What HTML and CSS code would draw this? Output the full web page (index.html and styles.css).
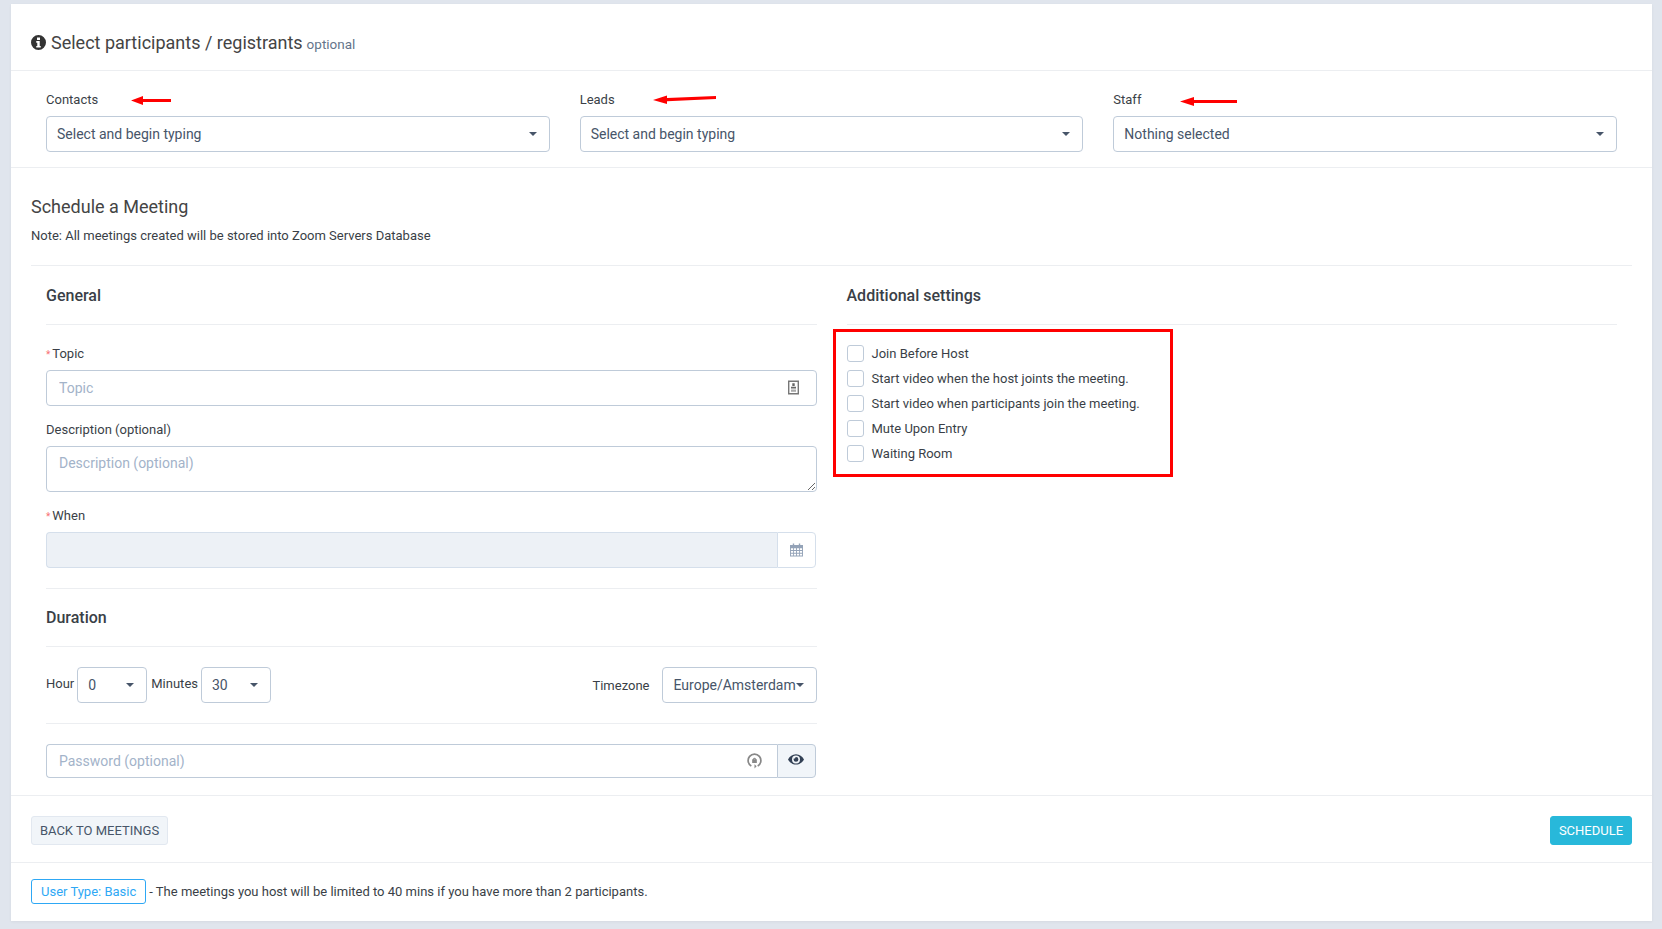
FILE: index.html
```html
<!DOCTYPE html>
<html lang="en">
<head>
    <meta charset="UTF-8">
    <meta name="viewport" content="width=device-width, initial-scale=1.0">
    <title>Schedule a Meeting</title>
    <link rel="stylesheet" href="styles.css">
</head>
<body>

    <div class="panel">

        <!-- Participants -->
        <div class="panel-head">
            <svg class="info-icon" viewBox="0 0 16 16"><path fill-rule="evenodd" d="M8 0a8 8 0 1 1 0 16A8 8 0 0 1 8 0zM6.400 2.700v2.600h3.200V2.700zM5.600 6.500v1.800h1.100v3.300H5.600v1.800h4.800v-1.800H9.300V6.500z"/></svg>
            <span class="panel-title">Select participants / registrants</span>
            <span class="panel-sub">optional</span>
        </div>

        <div class="participants">
            <div class="field">
                <label class="field-label">Contacts</label>
                <svg class="arrow arrow-contacts" viewBox="0 0 40 9"><path d="M0 4.500 12 0V3L40 3V6L12 6V9z"/></svg>
                <button class="select">Select and begin typing<span class="caret"></span></button>
            </div>
            <div class="field">
                <label class="field-label">Leads</label>
                <svg class="arrow arrow-leads" viewBox="0 0 63 10"><path d="M0 6 14 1.500V4L63 2V5L14 7.200V10z"/></svg>
                <button class="select">Select and begin typing<span class="caret"></span></button>
            </div>
            <div class="field">
                <label class="field-label">Staff</label>
                <svg class="arrow arrow-staff" viewBox="0 0 57 9"><path d="M0 4.500 14 0V3L57 3V6L14 6V9z"/></svg>
                <button class="select">Nothing selected<span class="caret"></span></button>
            </div>
        </div>

        <!-- Meeting form -->
        <div class="meeting">
            <h2 class="meeting-title">Schedule a Meeting</h2>
            <p class="meeting-note">Note: All meetings created will be stored into Zoom Servers Database</p>

            <div class="columns">
                <div class="col-general">
                    <h3 class="section-title">General</h3>

                    <label class="form-label"><span class="req">*</span>Topic</label>
                    <div class="input-wrap">
                        <input class="input" type="text" placeholder="Topic">
                        <svg class="input-icon icon-topic" viewBox="0 0 11 14"><path fill="none" stroke="#777" stroke-width="1.400" d="M.7.7h9.600v12.600H.7z"/><path fill="#666" d="M4.300 2.800h2.400v2.700H4.300zM3 6.200h5v1.800H3z"/><path fill="#aaa" d="M3 9h5v2.300H3z"/></svg>
                    </div>

                    <label class="form-label">Description (optional)</label>
                    <textarea class="input textarea" placeholder="Description (optional)"></textarea>

                    <label class="form-label"><span class="req">*</span>When</label>
                    <div class="input-group">
                        <input class="input input-disabled" type="text" disabled>
                        <span class="addon">
                            <svg class="calendar-icon" viewBox="0 0 14 14"><path fill="#94a3b8" fill-rule="evenodd" d="M3 0h1.500v1.500h5V0H11v1.500h3V14H0V1.500h3zM1 5v2h2.300V5zm3.200 0v2h2.300V5zm3.300 0v2h2.300V5zm3.200 0v2H13V5zM1 8v2h2.300V8zm3.200 0v2h2.300V8zm3.300 0v2h2.300V8zm3.200 0v2H13V8zM1 11v2h2.300v-2zm3.200 0v2h2.300v-2zm3.300 0v2h2.300v-2zm3.200 0v2H13v-2z"/></svg>
                        </span>
                    </div>

                    <h3 class="section-title section-title-duration">Duration</h3>

                    <div class="duration-row">
                        <span class="inline-label">Hour</span>
                        <button class="select select-small">0<span class="caret"></span></button>
                        <span class="inline-label">Minutes</span>
                        <button class="select select-small">30<span class="caret"></span></button>
                        <span class="inline-label timezone-label">Timezone</span>
                        <button class="select select-timezone">Europe/Amsterdam<span class="caret caret-tight"></span></button>
                    </div>

                    <div class="input-group input-group-password">
                        <div class="input-wrap">
                            <input class="input" type="text" placeholder="Password (optional)">
                            <svg class="input-icon icon-password" viewBox="0 0 14 16"><path fill="none" stroke="#888" stroke-width="1.600" d="M4 13.200A6 6 0 1 1 10 13.200"/><path fill="#888" d="M4.800 6.800h4.400v3.600H4.800zM5.700 6.800a1.300 1.300 0 0 1 2.600 0h-.8a.5.500 0 0 0-1 0zM7 11.500l2 2-2 2z"/></svg>
                        </div>
                        <span class="addon addon-grey">
                            <svg class="eye-icon" viewBox="0 0 16 12"><path fill="#334155" fill-rule="evenodd" d="M8 .8c3.500 0 6.300 2.100 8 5.100-1.700 3-4.500 5.200-8 5.200S1.700 8.900 0 5.900C1.700 2.900 4.500.8 8 .8zM8 2a4 4 0 1 0 0 8 4 4 0 0 0 0-8zM8 3.500a2.400 2.400 0 1 1-2.400 2.400c0-.4.100-.7.200-1a1.200 1.200 0 0 0 1.700-1.300c.1 0 .3-.1.500-.1z"/></svg>
                        </span>
                    </div>
                </div>

                <div class="col-settings">
                    <h3 class="section-title">Additional settings</h3>
                    <div class="checks">
                        <label class="check"><span class="checkbox"></span>Join Before Host</label>
                        <label class="check"><span class="checkbox"></span>Start video when the host joints the meeting.</label>
                        <label class="check"><span class="checkbox"></span>Start video when participants join the meeting.</label>
                        <label class="check"><span class="checkbox"></span>Mute Upon Entry</label>
                        <label class="check"><span class="checkbox"></span>Waiting Room</label>
                    </div>
                    <div class="red-box"></div>
                </div>
            </div>
        </div>

        <!-- Footer -->
        <div class="actions">
            <button class="btn btn-default">Back to meetings</button>
            <button class="btn btn-info">Schedule</button>
        </div>

        <div class="limit-note">
            <span class="badge">User Type: Basic</span>
            <span>- The meetings you host will be limited to 40 mins if you have more than 2 participants.</span>
        </div>
    </div>

</body>
</html>
```

FILE: styles.css
```css
* {
    margin: 0;
    padding: 0;
    box-sizing: border-box;
}

html, body {
    height: 100%;
    overflow: hidden;
}

body {
    font-family: Roboto, 'Liberation Sans', sans-serif;
    font-size: 13px;
    line-height: 18px;
    color: #3a3f47;
    background-color: #e0e5ed;
    padding: 4px 10px 8px 11px;
}

.panel {
    background-color: #fff;
    height: 917px;
    box-shadow: 0 1px 3px rgba(0, 0, 0, 0.05);
}

.panel-head {
    display: flex;
    align-items: center;
    height: 67px;
    padding: 11px 20px 0;
    border-bottom: 1px solid #eceef1;
}

.info-icon {
    width: 15px;
    height: 15px;
    fill: #333;
    margin-right: 5px;
    margin-top: -1px;
}

.panel-title {
    font-size: 18px;
    color: #444;
}

.panel-sub {
    font-size: 13.500px;
    color: #64748b;
    margin-left: 4px;
    margin-top: 2px;
}

.participants {
    display: grid;
    grid-template-columns: repeat(3, 1fr);
    gap: 30px;
    padding: 20px 35px 15px;
    border-bottom: 1px solid #eceef1;
}

.field {
    position: relative;
}

.field-label {
    display: block;
    margin-bottom: 7px;
}

.arrow {
    position: absolute;
    fill: #f00;
}

.arrow-contacts {
    left: 85px;
    top: 5px;
    width: 40px;
    height: 9px;
}

.arrow-leads {
    left: 73px;
    top: 3px;
    width: 63px;
    height: 10px;
}

.arrow-staff {
    left: 67px;
    top: 6px;
    width: 57px;
    height: 9px;
}

.select {
    display: flex;
    align-items: center;
    justify-content: space-between;
    width: 100%;
    height: 36px;
    padding: 0 12px 0 10px;
    background-color: #fff;
    border: 1px solid #bfcbd9;
    border-radius: 4px;
    font-family: inherit;
    font-size: 14px;
    color: #475569;
    text-align: left;
}

.caret {
    width: 0;
    height: 0;
    border-left: 4px solid transparent;
    border-right: 4px solid transparent;
    border-top: 4px solid #475569;
}

.caret-tight {
    margin-left: -1px;
}

.meeting {
    padding: 27px 20px 17px;
    border-bottom: 1px solid #eceef1;
}

.meeting-title {
    font-size: 18px;
    font-weight: 400;
    line-height: 24px;
    color: #444;
}

.meeting-note {
    margin-top: 8px;
    padding-bottom: 20px;
    border-bottom: 1px solid #eceef1;
}

.columns {
    display: grid;
    grid-template-columns: 1fr 1fr;
    gap: 30px;
    padding: 0 15px;
}

.section-title {
    font-size: 16px;
    font-weight: 500;
    line-height: 20px;
    color: #3a3f47;
    padding: 20px 0 18px;
    border-bottom: 1px solid #eceef1;
}

.section-title-duration {
    border-top: 1px solid #eceef1;
    margin-top: 20px;
    padding-top: 19px;
}

.form-label {
    display: block;
    margin-top: 15px;
    margin-bottom: 7px;
}

.section-title + .form-label {
    margin-top: 20px;
}

.req {
    color: #f87171;
    font-size: 10px;
    line-height: 0;
    margin-right: 2px;
}

.input-wrap {
    position: relative;
    flex: 1;
}

.input {
    display: block;
    width: 100%;
    height: 36px;
    padding: 0 12px;
    border: 1px solid #bfcbd9;
    border-radius: 4px;
    font-family: inherit;
    font-size: 14px;
    color: #475569;
    background-color: #fff;
    outline: none;
}

.input::placeholder {
    color: #a3b3c9;
    opacity: 1;
}

.textarea {
    height: 46px;
    padding: 7px 12px;
    line-height: 18px;
}

.input-icon {
    position: absolute;
}

.icon-topic {
    right: 18px;
    top: 10px;
    width: 11px;
    height: 15px;
}

.icon-password {
    right: 15px;
    top: 8px;
    width: 15px;
    height: 17px;
}

.input-group {
    display: flex;
    width: 770px;
}

.input-group .input {
    border-top-right-radius: 0;
    border-bottom-right-radius: 0;
    border-right: none;
}

.input-disabled {
    flex: 1;
    background-color: #edf1f6;
    border-color: #d5dfeb;
}

.addon {
    flex: none;
    display: flex;
    align-items: center;
    justify-content: center;
    width: 39px;
    height: 36px;
    background-color: #fff;
    border: 1px solid #d5dfeb;
    border-radius: 0 4px 4px 0;
}

.calendar-icon {
    width: 13px;
    height: 14px;
    margin-top: -1px;
}

.duration-row {
    display: flex;
    align-items: center;
    padding: 20px 0;
    border-bottom: 1px solid #eceef1;
}

.inline-label {
    margin-right: 3px;
    margin-top: -2px;
}

.select-small {
    width: 70px;
    margin-right: 4px;
}

.timezone-label {
    margin-left: auto;
    margin-right: 12px;
    margin-top: 1px;
}

.select-timezone {
    width: 155px;
    padding: 0 12px 0 11px;
}

.input-group-password {
    margin-top: 20px;
}

.input-group-password .input {
    height: 34px;
}

.addon-grey {
    height: 34px;
    background-color: #f1f5f9;
    border-color: #bfcbd9;
}

.eye-icon {
    width: 16px;
    height: 13px;
    margin-top: -3px;
    margin-left: -1px;
}

.col-settings {
    position: relative;
}

.checks {
    display: flex;
    flex-direction: column;
    gap: 8px;
    padding-top: 20px;
}

.check {
    display: flex;
    align-items: center;
    height: 17px;
}

.checkbox {
    width: 17px;
    height: 17px;
    margin-right: 8px;
    background-color: #fff;
    border: 1px solid #bfcbd9;
    border-radius: 3px;
}

/* annotation drawn over the screenshot */
.red-box {
    position: absolute;
    left: -14px;
    top: 63px;
    width: 340px;
    height: 148px;
    border: 3px solid #f00;
}

.actions {
    display: flex;
    justify-content: space-between;
    padding: 20px 20px 17px;
    border-bottom: 1px solid #eceef1;
}

.btn {
    height: 29px;
    border-radius: 3px;
    font-family: inherit;
    font-size: 13px;
    font-weight: 400;
    text-transform: uppercase;
}

.btn-default {
    width: 137px;
    color: #475569;
    background-color: #f1f5f9;
    border: 1px solid #e2e8f0;
}

.btn-info {
    width: 82px;
    color: #fff;
    background-color: #28b8da;
    border: 1px solid #28b8da;
}

.limit-note {
    display: flex;
    align-items: center;
    gap: 3px;
    padding: 16px 20px 0;
}

.badge {
    display: flex;
    align-items: center;
    height: 25px;
    padding: 0 9px;
    color: #2ea8f5;
    border: 1px solid #2ea8f5;
    border-radius: 3px;
}
```
